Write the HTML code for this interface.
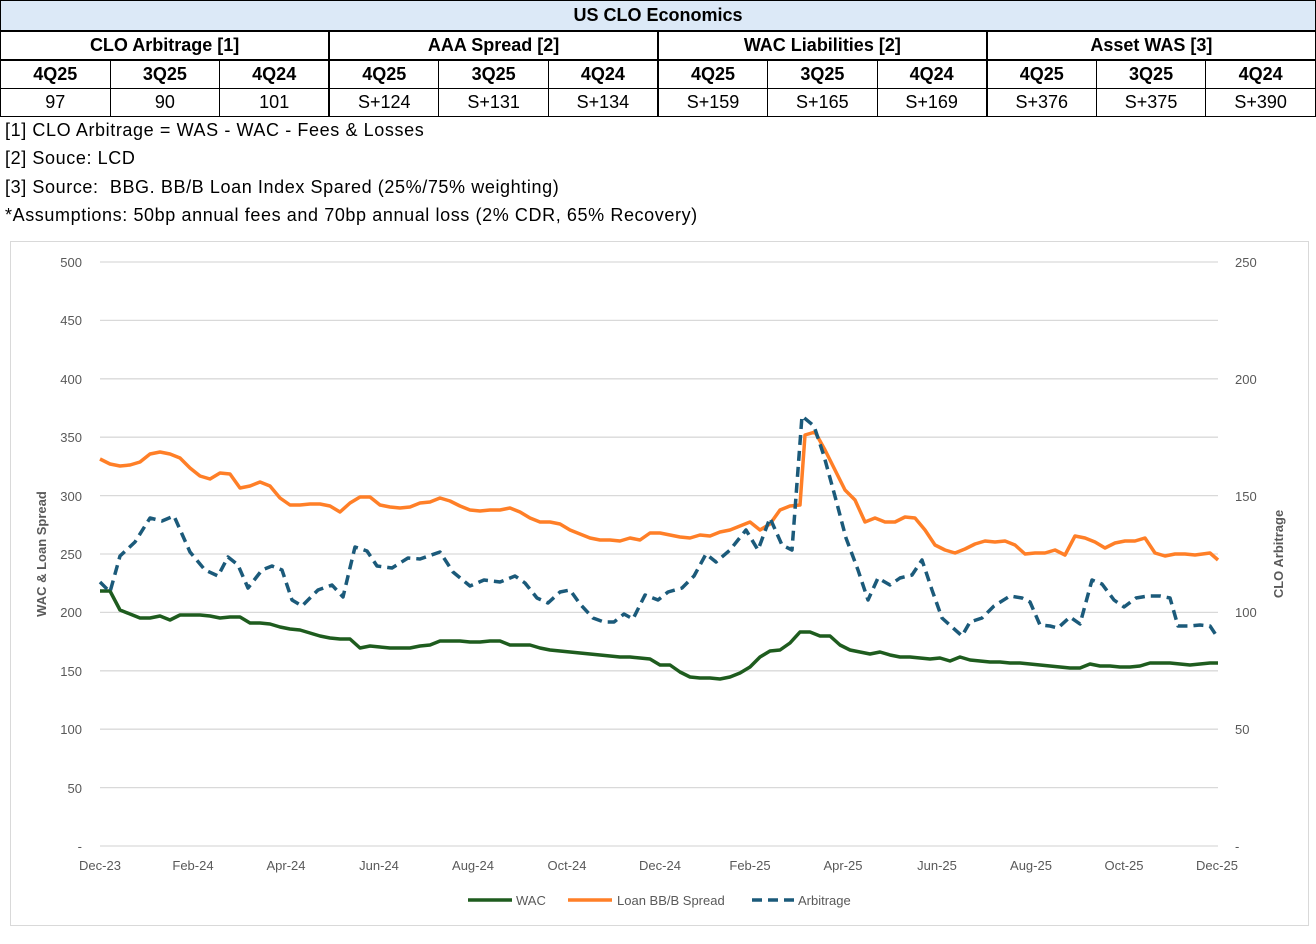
<!DOCTYPE html>
<html><head><meta charset="utf-8"><style>
body{margin:0;width:1316px;height:944px;background:#fff;font-family:"Liberation Sans",sans-serif;position:relative;overflow:hidden}
table{position:absolute;left:0;top:0;border-collapse:collapse;width:1316px;table-layout:fixed}
td{border:1px solid #000;text-align:center;font-size:18px;padding:0;height:27px;color:#000}
.t td{background:#dce9f7;font-weight:bold;height:29px;border-width:1px 1px 2px 1px}
.g td{font-weight:bold;border-bottom:2px solid #000}
.q td{font-weight:bold}
.bl{border-left:2px solid #000}
.n{position:absolute;left:5px;font-size:18px;letter-spacing:0.6px;color:#000}
</style></head><body>
<table>
<tr class="t"><td colspan="12">US CLO Economics</td></tr>
<tr class="g"><td colspan="3">CLO Arbitrage [1]</td><td colspan="3" class="bl">AAA Spread [2]</td><td colspan="3" class="bl">WAC Liabilities [2]</td><td colspan="3" class="bl">Asset WAS [3]</td></tr>
<tr class="q"><td>4Q25</td><td>3Q25</td><td>4Q24</td><td class="bl">4Q25</td><td>3Q25</td><td>4Q24</td><td class="bl">4Q25</td><td>3Q25</td><td>4Q24</td><td class="bl">4Q25</td><td>3Q25</td><td>4Q24</td></tr>
<tr><td>97</td><td>90</td><td>101</td><td class="bl">S+124</td><td>S+131</td><td>S+134</td><td class="bl">S+159</td><td>S+165</td><td>S+169</td><td class="bl">S+376</td><td>S+375</td><td>S+390</td></tr>
</table>
<div class="n" style="top:120px">[1] CLO Arbitrage = WAS - WAC - Fees &amp; Losses</div>
<div class="n" style="top:148px">[2] Souce: LCD</div>
<div class="n" style="top:177px">[3] Source:&nbsp; BBG. BB/B Loan Index Spared (25%/75% weighting)</div>
<div class="n" style="top:205px">*Assumptions: 50bp annual fees and 70bp annual loss (2% CDR, 65% Recovery)</div>
<svg style="position:absolute;left:0;top:0" width="1316" height="944" font-family="Liberation Sans, sans-serif">
<rect x="10.5" y="241.5" width="1298" height="684" fill="none" stroke="#d9d9d9"/>
<g stroke="#d9d9d9" stroke-width="1.3">
<line x1="100" x2="1218" y1="262" y2="262"/><line x1="100" x2="1218" y1="320.4" y2="320.4"/><line x1="100" x2="1218" y1="378.8" y2="378.8"/><line x1="100" x2="1218" y1="437.2" y2="437.2"/><line x1="100" x2="1218" y1="495.6" y2="495.6"/><line x1="100" x2="1218" y1="554" y2="554"/><line x1="100" x2="1218" y1="612.4" y2="612.4"/><line x1="100" x2="1218" y1="670.8" y2="670.8"/><line x1="100" x2="1218" y1="729.2" y2="729.2"/><line x1="100" x2="1218" y1="787.6" y2="787.6"/><line x1="100" x2="1218" y1="846" y2="846"/>
</g>
<g font-size="13" fill="#595959" text-anchor="end">
<text x="82" y="267">500</text><text x="82" y="325">450</text><text x="82" y="384">400</text><text x="82" y="442">350</text><text x="82" y="501">300</text><text x="82" y="559">250</text><text x="82" y="617">200</text><text x="82" y="676">150</text><text x="82" y="734">100</text><text x="82" y="793">50</text><text x="82" y="851">-</text>
</g>
<g font-size="13" fill="#595959">
<text x="1235" y="267">250</text><text x="1235" y="384">200</text><text x="1235" y="501">150</text><text x="1235" y="617">100</text><text x="1235" y="734">50</text><text x="1235" y="851">-</text>
</g>
<g font-size="13" fill="#595959" text-anchor="middle">
<text x="100" y="870">Dec-23</text><text x="193" y="870">Feb-24</text><text x="286" y="870">Apr-24</text><text x="379" y="870">Jun-24</text><text x="473" y="870">Aug-24</text><text x="567" y="870">Oct-24</text><text x="660" y="870">Dec-24</text><text x="750" y="870">Feb-25</text><text x="843" y="870">Apr-25</text><text x="937" y="870">Jun-25</text><text x="1031" y="870">Aug-25</text><text x="1124" y="870">Oct-25</text><text x="1217" y="870">Dec-25</text>
</g>
<text transform="translate(46,554) rotate(-90)" font-size="13" font-weight="bold" fill="#595959" text-anchor="middle">WAC &amp; Loan Spread</text>
<text transform="translate(1283,554) rotate(-90)" font-size="13" font-weight="bold" fill="#595959" text-anchor="middle">CLO Arbitrage</text>
<polyline fill="none" stroke="#ff7f27" stroke-width="3.5" stroke-linejoin="round" points="100,459 110,464 120,466 130,465 140,462 150,454 160,452 170,454 180,458 190,468 200,476 210,479 220,473 230,474 240,488 250,486 260,482 270,486 280,498 290,505 300,505 310,504 320,504 330,506 340,512 350,503 360,497 370,497 380,505 390,507 400,508 410,507 420,503 430,502 440,498 450,501 460,506 470,510 480,511 490,510 500,510 510,508 520,512 530,518 540,522 550,522 560,524 570,530 580,534 590,538 600,540 610,540 620,541 630,538 640,540 650,533 660,533 670,535 680,537 690,538 700,535 710,536 720,532 730,530 740,526 750,522 760,530 770,524 780,510 790,506 800,505 805,435 815,432 825,450 835,470 845,490 855,500 865,522 875,518 885,522 895,522 905,517 915,518 925,530 935,545 945,550 955,553 965,549 975,544 985,541 995,542 1005,541 1015,545 1025,554 1035,553 1045,553 1055,550 1065,555 1075,536 1085,538 1095,542 1105,548 1115,543 1125,541 1135,541 1145,538 1155,553 1165,556 1175,554 1185,554 1195,555 1210,553 1218,560"/>
<polyline fill="none" stroke="#1e5c1e" stroke-width="3.5" stroke-linejoin="round" points="100,591 110,591 120,610 130,614 140,618 150,618 160,616 170,620 180,615 190,615 200,615 210,616 220,618 230,617 240,617 250,623 260,623 270,624 280,627 290,629 300,630 310,633 320,636 330,638 340,639 350,639 360,648 370,646 380,647 390,648 400,648 410,648 420,646 430,645 440,641 450,641 460,641 470,642 480,642 490,641 500,641 510,645 520,645 530,645 540,648 550,650 560,651 570,652 580,653 590,654 600,655 610,656 620,657 630,657 640,658 650,659 660,665 670,665 680,672 690,677 700,678 710,678 720,679 730,677 740,673 750,667 760,657 770,651 780,650 790,643 800,632 810,632 820,636 830,636 840,645 850,650 860,652 870,654 880,652 890,655 900,657 910,657 920,658 930,659 940,658 950,661 960,657 970,660 980,661 990,662 1000,662 1010,663 1020,663 1030,664 1040,665 1050,666 1060,667 1070,668 1080,668 1090,664 1100,666 1110,666 1120,667 1130,667 1140,666 1150,663 1160,663 1170,663 1180,664 1190,665 1200,664 1210,663 1218,663"/>
<polyline fill="none" stroke="#1b5a7a" stroke-width="3.5" stroke-dasharray="10,6" stroke-linejoin="round" points="100,582 110,592 120,556 135,542 150,518 162,521 174,516 190,552 205,570 218,576 228,557 238,565 248,588 262,570 272,566 282,570 292,600 302,606 318,590 332,585 343,597 355,547 367,551 377,566 392,568 408,558 420,559 440,552 453,572 470,586 484,580 500,582 515,576 525,583 537,598 548,603 560,592 570,590 580,604 593,618 604,622 614,622 624,614 633,619 645,595 658,600 668,592 682,588 694,576 706,554 716,562 730,550 746,530 758,550 770,518 782,545 792,550 802,416 814,426 824,456 836,500 846,538 858,570 868,600 878,578 890,585 900,578 912,575 922,560 932,590 942,618 952,627 962,636 970,622 982,618 994,606 1010,596 1022,598 1030,602 1040,625 1050,626 1058,628 1070,617 1080,624 1092,580 1102,584 1114,600 1124,607 1136,598 1148,596 1160,596 1170,598 1178,626 1190,626 1200,625 1210,626 1218,638"/>
<line x1="468" x2="512" y1="900" y2="900" stroke="#1e5c1e" stroke-width="3.5"/>
<text x="516" y="905" font-size="13" fill="#595959">WAC</text>
<line x1="568" x2="612" y1="900" y2="900" stroke="#ff7f27" stroke-width="3.5"/>
<text x="617" y="905" font-size="13" fill="#595959">Loan BB/B Spread</text>
<line x1="752" x2="794" y1="900" y2="900" stroke="#1b5a7a" stroke-width="3.5" stroke-dasharray="10,6"/>
<text x="798" y="905" font-size="13" fill="#595959">Arbitrage</text>
</svg>
</body></html>
